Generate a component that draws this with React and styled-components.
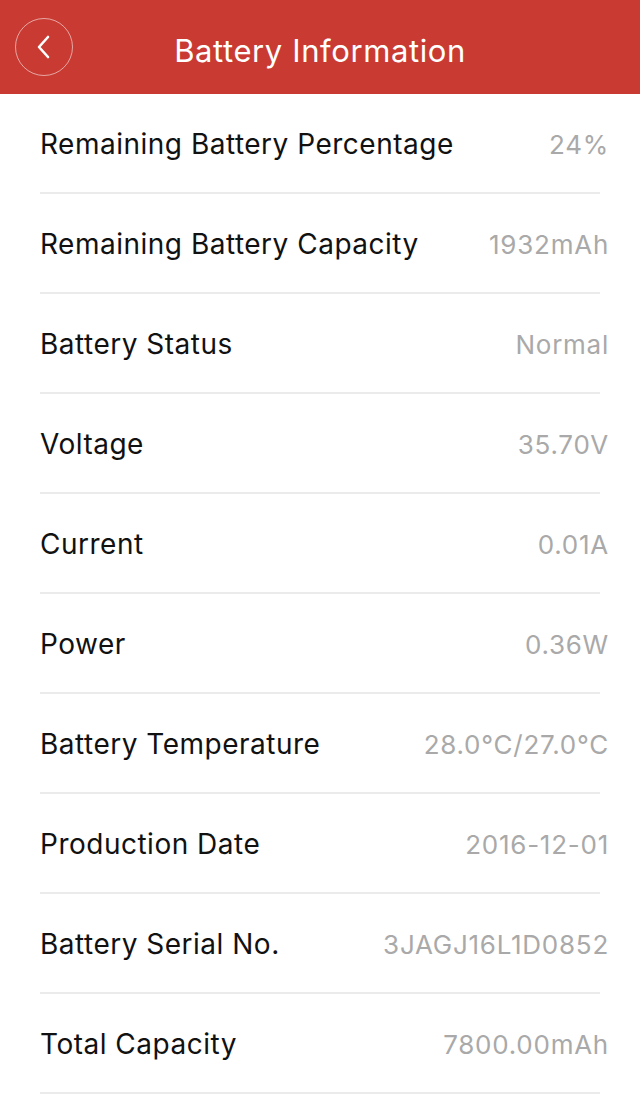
import styled, { createGlobalStyle } from 'styled-components'

const GlobalStyle = createGlobalStyle`
  body {
    margin: 0;
    background: #ffffff;
    font-family: Inter, "Noto Sans", sans-serif;
  }
`

const Page = styled.div`
  width: 640px;
  min-height: 1096px;
  background: #ffffff;
`

const Header = styled.header`
  height: 94px;
  background-color: #c93a32;
  display: grid;
  grid-template-columns: 88px 1fr 88px;
  align-items: center;
`

const BackButton = styled.button`
  width: 58px;
  height: 58px;
  margin-left: 15px;
  border-radius: 50%;
  border: 1px solid rgba(255, 255, 255, 0.55);
  background: transparent;
  display: flex;
  align-items: center;
  justify-content: center;
  padding: 0 2px 0 0;
  cursor: pointer;
`

const Title = styled.h1`
  margin: 0;
  padding-top: 6px;
  text-align: center;
  color: #ffffff;
  font-size: 31px;
  font-weight: 400;
  letter-spacing: 0.6px;
`

const List = styled.ul`
  list-style: none;
  margin: 0;
  padding: 0 31px 0 40px;
`

const Row = styled.li`
  height: 100px;
  display: flex;
  align-items: center;
  justify-content: space-between;
  position: relative;

  &::after {
    content: '';
    position: absolute;
    left: 0;
    right: 9px;
    bottom: 0;
    height: 2px;
    background: #ebebeb;
  }
`

const Label = styled.span`
  color: #111111;
  font-size: 28px;
  letter-spacing: 0.5px;
`

const Value = styled.span`
  color: #a9a9a9;
  font-size: 26px;
  letter-spacing: 0.75px;
`

const rows = [
  ['Remaining Battery Percentage', '24%'],
  ['Remaining Battery Capacity', '1932mAh'],
  ['Battery Status', 'Normal'],
  ['Voltage', '35.70V'],
  ['Current', '0.01A'],
  ['Power', '0.36W'],
  ['Battery Temperature', '28.0°C/27.0°C'],
  ['Production Date', '2016-12-01'],
  ['Battery Serial No.', '3JAGJ16L1D0852'],
  ['Total Capacity', '7800.00mAh'],
]

export default function App() {
  return (
    <Page>
      <GlobalStyle />
      <Header>
        <BackButton aria-label="Back">
          <svg width="18" height="26" viewBox="0 0 18 26" fill="none">
            <path
              d="M14 3 L5 13 L14 23"
              stroke="#ffffff"
              strokeWidth="2.6"
              strokeLinecap="round"
              strokeLinejoin="round"
            />
          </svg>
        </BackButton>
        <Title>Battery Information</Title>
        <div />
      </Header>
      <List>
        {rows.map(([label, value]) => (
          <Row key={label}>
            <Label>{label}</Label>
            <Value>{value}</Value>
          </Row>
        ))}
      </List>
    </Page>
  )
}
